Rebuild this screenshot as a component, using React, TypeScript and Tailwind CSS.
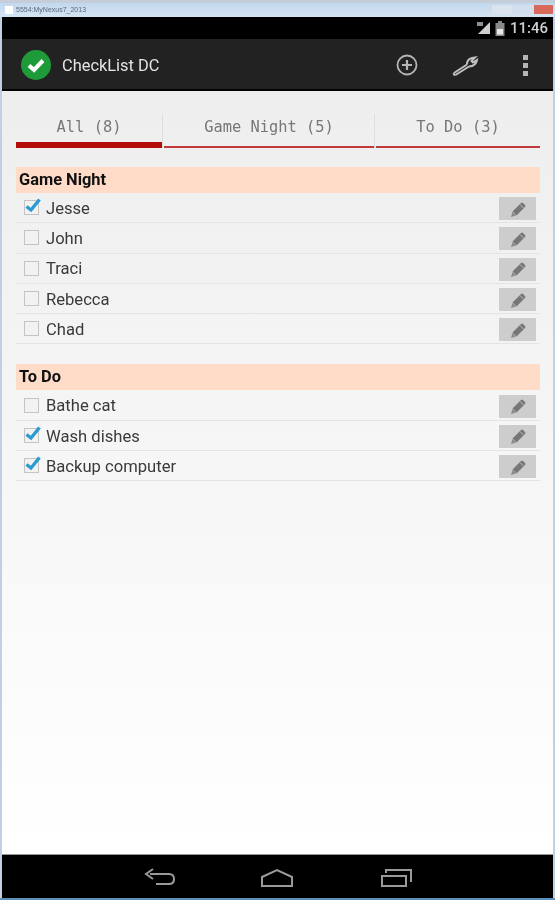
import React from 'react';

const font = { sans: 'font-["Roboto",sans-serif]' };

interface Item {
  label: string;
  checked: boolean;
}

const gameNight: Item[] = [
  { label: 'Jesse', checked: true },
  { label: 'John', checked: false },
  { label: 'Traci', checked: false },
  { label: 'Rebecca', checked: false },
  { label: 'Chad', checked: false },
];

const toDo: Item[] = [
  { label: 'Bathe cat', checked: false },
  { label: 'Wash dishes', checked: true },
  { label: 'Backup computer', checked: true },
];

const CheckBox = ({ checked }: { checked: boolean }) => (
  <span className="relative ml-[8px] h-[15px] w-[15px] shrink-0 border border-[#c4c4c4] bg-[#f2f2f2]">
    {checked && (
      <svg className="absolute left-[-1px] top-[-4px]" width="18" height="18" viewBox="0 0 18 18">
        <path d="M2.5 9.5 L7 13 L15.5 2.5" fill="none" stroke="#2a9bd0" strokeWidth="3.4" />
      </svg>
    )}
  </span>
);

const Pencil = () => (
  <svg width="20" height="20" viewBox="0 0 20 20">
    <path d="M4.5 12.5 L13 4 Q14 3 15 4 L17 6 Q18 7 17 8 L8.500 16.500 Z" fill="#777777" />
    <path d="M4.500 13 L8 16.500 L3 18 Z" fill="#8a8a8a" />
    <path d="M12 5.500 L15.500 9" stroke="#bdbdbd" strokeWidth="1" />
  </svg>
);

const Row = ({ item }: { item: Item }) => (
  <div className="flex h-[30.3px] items-center border-b border-[#e4e4e4] pr-[4px]">
    <CheckBox checked={item.checked} />
    <span className={`ml-[7px] flex-1 pt-[3px] text-[16.6px] leading-none text-[#3a3a3a] ${font.sans}`}>{item.label}</span>
    <span className="mt-[2px] flex h-[23px] w-[37px] items-center justify-center bg-[#cdcdcd]">
      <Pencil />
    </span>
  </div>
);

const Group = ({ title, items }: { title: string; items: Item[] }) => (
  <div>
    <div className={`flex h-[26px] items-center bg-[#ffdcc8] pl-[3px] text-[16.4px] font-bold text-[#111] ${font.sans}`}>
      {title}
    </div>
    {items.map((item) => (
      <Row key={item.label} item={item} />
    ))}
  </div>
);

const Tab = ({ label, active, className }: { label: string; active?: boolean; className: string }) => (
  <div className={`relative flex h-[41px] flex-col ${className}`}>
    <div className="flex flex-1 items-center justify-center pt-[6px] font-['DejaVu_Sans_Mono',monospace] text-[15.4px] text-[#777]">
      {label}
    </div>
    <div className={active ? 'h-[6px] bg-[#b30a0a]' : 'mt-[4px] h-[2px] bg-[#c2393a]'} />
  </div>
);

export default function App() {
  return (
    <div className="flex h-[900px] w-[555px] flex-col overflow-hidden bg-black blur-[0.5px]">
      {/* window chrome */}
      <div className="flex h-[17px] items-center justify-between border-t-[3px] border-[#c4cdd8] bg-gradient-to-b from-[#c2d8ee] to-[#d6e4f2] pl-[5px] pr-[2px]">
        <div className="flex items-center gap-[3px]">
          <span className="h-[8px] w-[8px] bg-white" />
          <span className="font-['Liberation_Sans',sans-serif] text-[7px] text-[#5a6a7a]">5554:MyNexus7_2013</span>
        </div>
        <div className="flex h-[11px] items-start gap-[1px]">
          <span className="h-[9px] w-[20px] bg-[#dbe4ee]" />
          <span className="h-[9px] w-[20px] bg-[#d3dfec]" />
          <span className="h-[9px] w-[19px] bg-[#d9695a]" />
        </div>
      </div>

      <div className="flex min-h-0 flex-1 flex-col border-x-[2px] border-[#bfd0e2]">
        {/* status bar */}
        <div className="flex h-[22px] items-center justify-end gap-[3px] bg-black pr-[5px]">
          <svg width="16" height="16" viewBox="0 0 16 16">
            <path d="M2 14 L14 2 V14 Z" fill="#cfcfcf" />
            <path d="M1 2 H7 V6 H1 Z" fill="#8f8f8f" />
          </svg>
          <svg width="10" height="15" viewBox="0 0 10 15">
            <path d="M3 0 H7 V2 H9.500 V15 H.5 V2 H3 Z" fill="#8a8a8a" />
            <path d="M2 8 H8 V13.500 H2 Z" fill="#e8e8e8" />
          </svg>
          <span className="ml-[2px] font-['Roboto',sans-serif] text-[15px] font-medium leading-none text-[#cfcfcf]">11:46</span>
        </div>

        {/* action bar */}
        <div className="flex h-[52px] items-center border-b-[2px] border-black bg-[#222222] pl-[19px] pt-[2px]">
          <svg width="30" height="30" viewBox="0 0 30 30" className="shrink-0">
            <circle cx="15" cy="15" r="15" fill="#1f9a38" />
            <path d="M8 15.500 L13 20 L22 10.500" fill="none" stroke="#ffffff" strokeWidth="4" />
          </svg>
          <span className={`ml-[11px] flex-1 pt-[2px] text-[16.4px] text-[#e4e4e4] ${font.sans}`}>CheckList DC</span>
          <svg width="22" height="22" viewBox="0 0 22 22" className="mr-[33px]">
            <circle cx="11" cy="11" r="9.500" fill="none" stroke="#b5b5b5" strokeWidth="1.800" />
            <path d="M11 6 V16 M6 11 H16" stroke="#b5b5b5" strokeWidth="2.200" />
          </svg>
          <svg width="28" height="24" viewBox="0 0 28 24" className="mr-[44px]">
            <path d="M3 20 L16 11.500 M4.500 22 L18 13.500" fill="none" stroke="#c0c0c0" strokeWidth="2" />
            <path d="M3 20 Q2 22 4.500 22" fill="none" stroke="#c0c0c0" strokeWidth="2" />
            <path d="M16 11.500 Q16 6 21 5 L24 4.500 L20.500 8 L22 9.500 L26 7 Q25 13 18 13.500" fill="none" stroke="#c0c0c0" strokeWidth="2" />
          </svg>
          <div className="mr-[25px] flex flex-col gap-[3px]">
            <span className="h-[5px] w-[5px] bg-[#b5b5b5]" />
            <span className="h-[5px] w-[5px] bg-[#b5b5b5]" />
            <span className="h-[5px] w-[5px] bg-[#b5b5b5]" />
          </div>
        </div>

        {/* content */}
        <div className="flex-1 bg-gradient-to-b from-[#eeeeee] to-[#ffffff] pl-[14px] pr-[13px] pt-[16px]">
          <div className="flex">
            <Tab label="All (8)" active className="w-[146px]" />
            <div className="mt-[7px] h-[34px] w-[2px] border-l border-[#dedede]" />
            <Tab label="Game Night (5)" className="flex-1" />
            <div className="mt-[7px] h-[34px] w-[2px] border-l border-[#dedede]" />
            <Tab label="To Do (3)" className="w-[164px]" />
          </div>
          <div className="mt-[19px] flex flex-col gap-[20px]">
            <Group title="Game Night" items={gameNight} />
            <Group title="To Do" items={toDo} />
          </div>
        </div>

        {/* nav bar */}
        <div className="flex h-[44px] items-center justify-center border-t border-[#999] bg-black pt-[2px]">
          <svg width="32" height="20" viewBox="0 0 32 20">
            <path d="M6 6 H25 Q30 6 30 11 Q30 16 25 16 H12 M9 1 L2 6 L9 11" fill="none" stroke="#9a9a9a" strokeWidth="2" />
          </svg>
          <svg width="34" height="20" viewBox="0 0 34 20" className="ml-[84px]">
            <path d="M2 9 L17 2 L32 9 V18 H2 Z" fill="none" stroke="#9a9a9a" strokeWidth="2" />
          </svg>
          <svg width="32" height="20" viewBox="0 0 32 20" className="ml-[86px]">
            <path d="M2 8 H26 V18 H2 Z" fill="none" stroke="#9a9a9a" strokeWidth="2" />
            <path d="M6 5 V2 H31 V14" fill="none" stroke="#9a9a9a" strokeWidth="2" />
          </svg>
        </div>
      </div>
      <div className="h-[2px] bg-[#5f90b8]" />
    </div>
  );
}
